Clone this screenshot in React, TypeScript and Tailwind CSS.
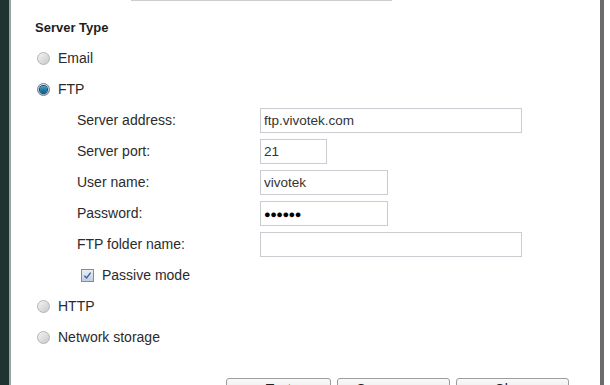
import React from 'react';

const fields = [
    { label: 'Server address:', value: 'ftp.vivotek.com', width: 'w-[262px]' },
    { label: 'Server port:', value: '21', width: 'w-[67px]' },
    { label: 'User name:', value: 'vivotek', width: 'w-[128px]' },
    { label: 'Password:', value: '●●●●●●', width: 'w-[128px]', secret: true },
    { label: 'FTP folder name:', value: '', width: 'w-[262px]' },
];

const buttons = [
    { label: 'Test', width: 'w-[105px]' },
    { label: 'Save server', width: 'w-[113px]' },
    { label: 'Close', width: 'w-[113px]' },
];

function Radio({ checked, label }: { checked?: boolean; label: string }) {
    return (
        <label className="flex h-[31px] items-center gap-[8px] pl-[26px]">
            {checked ? (
                <span className="flex h-[13px] w-[13px] items-center justify-center rounded-full border border-[#6a7f8f] bg-gradient-to-b from-[#dfe8ef] to-[#9fb4c4]">
                    <span className="h-[7px] w-[7px] rounded-full bg-gradient-to-b from-[#3aa2d0] to-[#0c5a86] ring-1 ring-[#1d3f57]" />
                </span>
            ) : (
                <span className="h-[13px] w-[13px] rounded-full border border-[#b4b4b4] bg-gradient-to-br from-[#f4f4f4] to-[#c9c9c9]" />
            )}
            <span className="text-[14px] text-[#2b2b2b]">{label}</span>
        </label>
    );
}

export default function App() {
    return (
        <div className="flex h-[385px] w-[610px] overflow-hidden bg-white font-['Liberation_Sans',Arial,sans-serif]">
            <div className="w-[9px] bg-[#1f3333]" />
            <div className="w-[2px] bg-[#9aa2a2]" />

            <div className="flex w-[589px] flex-col">
                {/* tail of the field above, scrolled off */}
                <div className="ml-[120px] h-[4px] w-[261px] border-x border-b border-[#cdcdcd]" />

                <div className="mt-[11px] flex flex-col">
                    <div className="flex h-[31px] items-center pl-[24px] text-[13px] font-bold text-[#1e1e1e]">Server Type</div>

                    <Radio label="Email" />
                    <Radio label="FTP" checked />

                    {fields.map(f => (
                        <div key={f.label} className="flex h-[31px] items-center pl-[66px]">
                            <span className="w-[183px] text-[14px] text-[#2b2b2b]">{f.label}</span>
                            <input
                                readOnly
                                value={f.value}
                                className={`${f.width} h-[25px] border border-[#c9cdd1] bg-white px-[3px] outline-none ${
                                    f.secret ? 'text-[11px] tracking-[-0.5px] text-black' : 'text-[13.5px] text-[#333]'
                                }`}
                            />
                        </div>
                    ))}

                    <label className="flex h-[31px] items-center gap-[8px] pl-[70px]">
                        <span className="flex h-[13px] w-[13px] items-center justify-center border border-[#7a8ea3] bg-gradient-to-b from-[#e9eef5] to-[#c3cfdd]">
                            <svg viewBox="0 0 10 10" className="h-[9px] w-[9px]">
                                <path d="M1.5 5.2 L4 7.8 L8.5 1.8" fill="none" stroke="#3a5fa8" strokeWidth="1.5" />
                            </svg>
                        </span>
                        <span className="text-[14px] text-[#2b2b2b]">Passive mode</span>
                    </label>

                    <Radio label="HTTP" />
                    <Radio label="Network storage" />
                </div>

                <div className="mt-[25px] flex gap-[6px] pl-[215px]">
                    {buttons.map(b => (
                        <button
                            key={b.label}
                            className={`${b.width} flex h-[24px] items-start justify-center rounded-[3px] border border-[#9c9c9c] bg-gradient-to-b from-[#fafafa] to-[#dcdcdc] pt-[2px] text-[14px] leading-[16px] text-[#222]`}
                        >
                            {b.label}
                        </button>
                    ))}
                </div>
            </div>

            <div className="w-[4px] bg-[#6b6b6b]" />
            <div className="w-[6px] bg-white" />
        </div>
    );
}
